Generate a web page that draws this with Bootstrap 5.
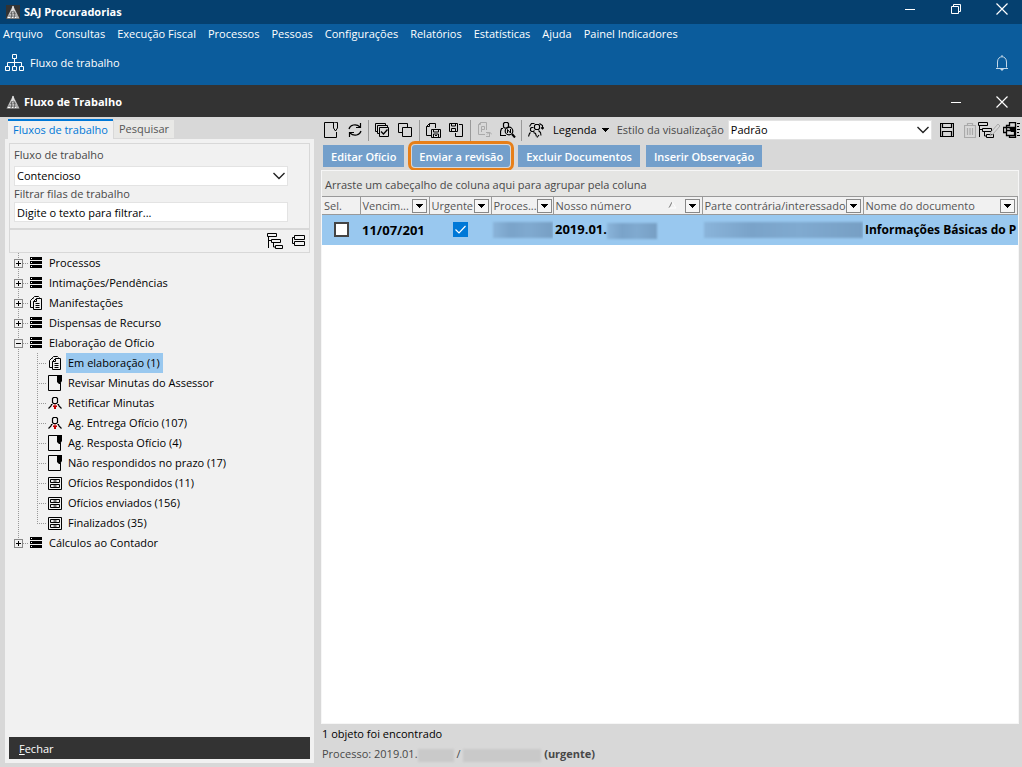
<!DOCTYPE html>
<html lang="pt-BR">
<head>
<meta charset="utf-8">
<meta name="viewport" content="width=device-width, initial-scale=1">
<title>SAJ Procuradorias</title>
<link rel="stylesheet" href="https://cdn.jsdelivr.net/npm/bootstrap@5.3.0/dist/css/bootstrap.min.css">
<style>
  body { font: 11px/16px "Open Sans", "Noto Sans", sans-serif; background: #d8d8d8; color: #000; }
  svg { display: block; flex: none; }
  button, select, input { font: inherit; }

  /* window chrome */
  .app-title { height: 24px; padding-left: 6px; background: #05406f; color: #fff; }
  .app-title .chrome-btn { height: 18px; align-self: flex-start; }
  .app-logo { background: #333; }
  .app-menu { height: 61px; background: #0b5c9c; }
  .app-menu a { color: #fff; text-decoration: none; white-space: nowrap; }
  .menu-row { gap: 12px; padding: 2px 3px 0; }
  .win-title { height: 32px; padding: 2px 0 0 6px; background: #333; color: #fff; }
  .chrome-btn { border: 0; background: none; color: #fff; padding: 0; width: 46px; display: flex; justify-content: center; align-items: center; }
  .chrome-btn:last-child { margin-right: -3px; }

  /* left side */
  .side { width: 309px; margin-left: 5px; }
  .tab-row { padding: 2px 3px 0; gap: 1px; }
  .side-tab { border: 0; height: 18px; padding: 0 5px; background: #e8e8e6; color: #555; line-height: 18px; }
  .side-tab.current { height: 20px; background: #f1f1f1; color: #0078d7; border-top: 2px solid #0078d7; line-height: 16px; }
  .side-body { background: #f1f1f1; padding: 4px; }
  .box { border: 1px solid #d8d8d8; }
  .form-box { padding: 3px 21px 6px 4px; }
  .form-box .drop { margin-top: 3px; }
  .mini-bar { height: 24px; gap: 4px; padding-right: 1px; }
  .box-label { color: #484848; }
  .field { border: 1px solid #e3e3e3; border-radius: 0; background-color: #fff; color: #000; width: 100%; height: 20px; padding: 0 2px; appearance: none; outline: 0; }
  .field::placeholder { color: #000; opacity: 1; }
  .drop { position: relative; }
  .drop svg { position: absolute; right: 3px; top: 6px; pointer-events: none; }
  .close-btn { border: 0; background: #333; color: #fff; height: 22px; padding: 2px 10px 0; text-align: left; }

  /* queue tree */
  .tree, .tree ul { list-style: none; margin: 0; padding: 0; }
  .tree { background: linear-gradient(#999 1px, transparent 1px) 9px 0 / 1px 2px repeat-y; }
  .tree > li:last-child { background: linear-gradient(#f1f1f1, #f1f1f1) 9px 11px / 1px 9px no-repeat; }
  .node { display: flex; align-items: center; height: 20px; }
  .node a { color: #000; text-decoration: none; line-height: 18px; padding: 1px 3px 1px 2px; }
  .node a.picked { background: #99c8ef; }
  .node > svg { margin: 0 5px 0 2px; }
  .toggle { width: 9px; height: 9px; margin-left: 5px; flex: none; padding: 0; border: 1px solid #888; background: #f1f1f1 linear-gradient(#000, #000) center / 5px 1px no-repeat; }
  .toggle.shut { background: linear-gradient(#000, #000) center / 5px 1px no-repeat, linear-gradient(#000, #000) center / 1px 5px no-repeat, #f1f1f1; }
  .dots { width: 5px; height: 1px; background: repeating-linear-gradient(90deg, #999 0 1px, transparent 1px 2px); flex: none; }
  .tree ul { margin-left: 28px; background: linear-gradient(#999 1px, transparent 1px) 0 0 / 1px 2px repeat-y; }
  .tree ul .dots { width: 9px; }
  .tree ul .node > svg { margin: 0 4px 0 2px; }
  .tree ul li:last-child { background: linear-gradient(#f1f1f1, #f1f1f1) 0 11px / 1px 9px no-repeat; }

  /* right side */
  .work { min-width: 0; margin-left: 7px; }
  .tools { height: 26px; padding-left: 1px; }
  .tool-set { gap: 4px; }
  .tool { border: 0; background: none; padding: 0; color: #000; width: 19px; display: flex; justify-content: center; }
  .tool:disabled { color: #aaa; }
  .vbar { width: 1px; height: 21px; background: #999; }
  .legend-btn { border: 0; background: none; padding: 0 8px; gap: 5px; }
  .end-tools { padding: 0 2px 0 6px; }
  .end-tools .tool { width: 17px; }
  .end-tools .save-tool { margin-right: 6px; }
  .end-tools .pen-tool { margin-left: -9px; }
  .actions { padding: 2px 2px 3px; gap: 6px; }
  .act { border: 0; height: 22px; background: #739fcb; color: #fff; font-weight: 600; padding: 1px 8px 0; white-space: nowrap; }
  .act.ring { outline: 3px solid #e77f18; outline-offset: 1px; border-radius: 3px; padding: 1px 7px 0; margin: 0 2px; }
  .sheet { background: #fff; margin-right: 3px; border: 1px solid #f6f6f6; overflow: hidden; }
  .group-bar { height: 25px; background: #e5e5e3; color: #484848; line-height: 27px; padding-left: 3px; }
  .grid { table-layout: fixed; width: 100%; border-collapse: collapse; }
  .grid th { height: 18px; padding: 0 2px 0 2px; border: 1px solid #999; border-left: 0; background: #f1f1f1; color: #555; font-weight: 400; line-height: 16px; white-space: nowrap; }
  .grid td { height: 30px; padding: 0 0 0 2px; background: #99c8ef; font-weight: 700; font-size: 12px; white-space: nowrap; overflow: hidden; }
  .grid td.figure-cell { font-size: 13px; }
  .grid td.tick-cell { padding: 0; }
  .col-sel { width: 38px; }
  .col-due { width: 69px; }
  .col-urg { width: 62px; }
  .col-proc { width: 62px; }
  .col-num { width: 149px; }
  .col-party { width: 161px; }
  .filter { width: 15px; height: 14px; margin-top: 1px; padding: 0; border: 1px solid #888; background: #f6f6f6; display: flex; align-items: center; justify-content: center; flex: none; }
  .tickbox { appearance: none; width: 15px; height: 15px; margin: 0; border: 2px solid #444; background: #fff; display: block; }
  .tickbox:checked { border: 0; background: #0078d7 url("data:image/svg+xml,%3Csvg xmlns='http://www.w3.org/2000/svg' viewBox='0 0 15 15'%3E%3Cpath d='M2.5 7.5 6 11l6.500-7' fill='none' stroke='white' stroke-width='1.200'/%3E%3C/svg%3E"); }
  .masked { display: inline-block; height: 16px; background: linear-gradient(90deg, #8ab4da, #7aa3c9 30%, #80aad0 60%, #779fc4); filter: blur(1px); vertical-align: middle; }
  .masked-grey { display: inline-block; height: 13px; background: #c9c9c9; filter: blur(1px); vertical-align: middle; }
  .mask-num { width: 50px; }
  .mask-a { width: 36px; }
  .mask-b { width: 78px; }
  .foot { height: 43px; padding: 0 1px; line-height: 20px; }
</style>
</head>
<body class="min-vh-100 d-flex flex-column overflow-hidden">

<svg width="0" height="0" class="position-absolute" aria-hidden="true">
  <defs>
    <symbol id="logo" viewBox="0 0 14 14"><path d="M7 .5 13.500 13.500H.5z" fill="#bbb"/><path d="M7 1v4M5.500 5.500h1M8 6h1M6 8h1M4 10h1.500M7 10h2M9.500 11h1.500M2 12.500h2M5 12.500h2M8 12.500h2" stroke="#fff" fill="none"/><path d="M2.500 11h9M4 8.800h6M5 6.800h4M5.500 7v6M8.500 7v6" stroke="#444" stroke-width=".6" fill="none"/></symbol>
    <symbol id="min" viewBox="0 0 10 12"><path d="M0 6h10v1H0z"/></symbol>
    <symbol id="cross" viewBox="0 0 12 12"><path d="M.5.5l11 11M11.500.5l-11 11" fill="none" stroke="currentColor" stroke-width="1.200"/></symbol>
    <symbol id="chev" viewBox="0 0 12 8"><path d="M.5 1 6 6.500 11.500 1" fill="none" stroke="#222" stroke-width="1.400"/></symbol>
    <symbol id="down" viewBox="0 0 7 4"><path d="M0 0h7v1H6v1H5v1H4v1H3V3H2V2H1V1H0z" shape-rendering="crispEdges"/></symbol>
    <symbol id="stack" viewBox="0 0 12 12"><path d="M0 0h12v3H0zM0 4h12v3H0zM0 8h12v3H0z"/><path d="M1 1h1v1H1zM1 5h1v1H1zM1 9h1v1H1z" fill="#fff"/></symbol>
    <symbol id="papers" viewBox="0 0 12 15"><path d="M3.500 5.500v8h8v-11h-5zM6.500 2.500v3h-3M3 11.500H.5v-7l3-3M3.500 2.500v-1l1-1h4l1 1M5.500 7.500h4M5.500 9.500h4M5.500 11.500h4" fill="none" stroke="currentColor"/></symbol>
    <symbol id="note" viewBox="0 0 14 16"><path d="M9 .5H.5v15h12V8" fill="none" stroke="currentColor"/><path d="M9 0h5v6l-2 3h-1L9 7z"/></symbol>
    <symbol id="person" viewBox="0 0 14 13"><path d="M4.500 5.500v-4l1-1h3l1 1v4l-1 1h-3zM4.500 7.500h-1L3 9l-2.500 2.500M9.500 7.500h1L11 9l2.500 2.500" fill="none" stroke="currentColor" stroke-width="1.200"/><path d="M6.500 7h1v1.500H9V10H8v2H6v-2H5V8.500h1.500z" fill="#c00000"/></symbol>
    <symbol id="cabinet" viewBox="0 0 14 13"><path d="M.5.5h13v12H.5zM2.500 2.500h9v3h-9zM2.500 7.500h9v3h-9zM5.500 4h3M5.500 9h3" fill="none" stroke="currentColor"/></symbol>
    <symbol id="hier" viewBox="0 0 17 16"><path d="M.5.500h9v3h-9zM4.500 6.500h9v3h-9zM8.500 12.500h7v3h-7zM1.500 4v11M1.500 7.500h3M6.500 10v4h2" fill="none" stroke="currentColor"/></symbol>
    <symbol id="fold" viewBox="0 0 13 12"><path d="M2.500.5h10v4h-10zM2.500 6.500h10v4h-10zM2 2.500H.5v6H2" fill="none" stroke="currentColor"/></symbol>
    <symbol id="page" viewBox="0 0 15 17"><path d="M9.500.5H.5v15h12V10M9.500 0v6l2 3 2-3V.5z" fill="none" stroke="currentColor"/></symbol>
    <symbol id="cycle" viewBox="0 0 14 14"><path d="M1 6c1-4 7-6 11-2M12.500 0v4.500H8M13 8c-1 4-7 6-11 2M1.500 14V9.500H6" fill="none" stroke="currentColor" stroke-width="1.200"/></symbol>
    <symbol id="copies" viewBox="0 0 15 14"><path d="M4 9.500H.5v-9h9V4M4.500 4.500h9v9h-9z" fill="none" stroke="currentColor"/></symbol>
    <symbol id="copiesok" viewBox="0 0 15 14"><path d="M2 8.500H.5v-8h10V2M4 10.500H2.500v-8h10V4M4.500 4.500h9v9h-9z" fill="none" stroke="currentColor"/><path d="M6 8.500l2.500 2.500 4-4.500" fill="none" stroke="currentColor" stroke-width="1.300"/></symbol>
    <symbol id="pagesave" viewBox="0 0 15 15"><path d="M5 12.500H.5v-9l3-3h6V5M3.500.5v3h-3M5.500 6.500h9v8h-9zM7.500 7v2h5V7M7.500 14v-3h5v3M9 12.500h2" fill="none" stroke="currentColor"/></symbol>
    <symbol id="savepage" viewBox="0 0 15 15"><path d="M.5.5h8v8h-8zM2.500 1v2h4V1M2.500 8V5.500h4V8M10 1.500h3.500v12h-7V10" fill="none" stroke="currentColor"/></symbol>
    <symbol id="pdf" viewBox="0 0 14 16"><path d="M7 12.500H.5V2.500l2-2h6V8M2.500.5v2H.5M3.500 10V4.500h3v3h-3M8 10.500h3.500V15M9 12.500l2.500-2.500 2.500 2.500M8 14.500h3" fill="none" stroke="currentColor"/></symbol>
    <symbol id="search" viewBox="0 0 16 16"><path d="M3.500 5V1.500l1-1h3l1 1V5l-1 1h-3zM3 6.500H1.500l-1 3v4H6" fill="none" stroke="currentColor" stroke-width="1.200"/><circle cx="9" cy="9" r="3.800" fill="none" stroke="currentColor" stroke-width="1.200"/><path d="M12 12l3 3.500" stroke="currentColor" stroke-width="2"/><path d="M7.500 11V7.500l3 3.500V7" fill="none" stroke="currentColor"/></symbol>
    <symbol id="swap" viewBox="0 0 16 15"><path d="M7.500 1.500h3l1 1v3l-1 1h-3l-1-1v-3zM3.500 4.500h2M3.500 4.500l-1 1v2l1 1h2l1-1M.5 13.500l1-3 1-1M5.500 9.500l2 1 1 3M10.500 7.500l2 2 .500 3M1.500 3.500l2-3h3M11.500.5l3 2v3M13 4.500l1.500 1.500L16 4.500M11 12l-2 2.500" fill="none" stroke="currentColor" stroke-width="1.100"/></symbol>
    <symbol id="disk" viewBox="0 0 14 14"><path d="M.5.5h13v13H.5zM2.500 1v3.500h9V1M2.500 13V8.500h9V13" fill="none" stroke="currentColor" stroke-width="1.200"/></symbol>
    <symbol id="bin" viewBox="0 0 12 15"><path d="M0 2.500h12M3.500 2V.5h5V2M.5 3v11.500h11V3M3.500 5v7M6 5v7M8.500 5v7" fill="none" stroke="currentColor" stroke-width="1.200"/></symbol>
    <symbol id="pen" viewBox="0 0 12 14"><path d="M1 13l1-4L9 1l2 2-7 8z" fill="none" stroke="currentColor"/></symbol>
    <symbol id="print" viewBox="0 0 17 16"><path d="M3.500 5.500v-2h3v-3h6v3M3 5.500H.5v5H3M3.500 5.500h8v8h-8zM6.500 14v1.500h6V.5M4 8.500h8" fill="none" stroke="currentColor" stroke-width="1.300"/><path d="M6 5h5v5H8zM14 1h3v1h-3zM14 4h2v1h-2zM14 7h3v1h-3zM14 10h2v1h-2zM14 13h3v1h-3z"/></symbol>
    <symbol id="bell" viewBox="0 0 12 16"><path d="M1.500 12.500V7c0-7 9-7 9 0v5.500M0 13.500h12M6 0v2" fill="none" stroke="#c4d8e8"/><path d="M4 14h4l-2 2z" fill="#c4d8e8"/></symbol>
  </defs>
</svg>

<header>
  <div class="app-title d-flex align-items-center">
    <svg class="app-logo" width="14" height="14"><use href="#logo"/></svg>
    <strong class="ps-1 flex-grow-1">SAJ Procuradorias</strong>
    <button class="chrome-btn" aria-label="Minimizar"><svg width="10" height="12" fill="currentColor"><use href="#min"/></svg></button>
    <button class="chrome-btn" aria-label="Restaurar"><svg width="10" height="12" viewBox="0 0 10 12" fill="none" stroke="#fff"><path d="M.5 3.500h7v7h-7zM2.500 3V1.500h7v7H8"/></svg></button>
    <button class="chrome-btn" aria-label="Fechar aplicativo"><svg width="12" height="12"><use href="#cross"/></svg></button>
  </div>
  <div class="app-menu">
    <nav class="d-flex menu-row">
      <a href="#">Arquivo</a><a href="#">Consultas</a><a href="#">Execução Fiscal</a><a href="#">Processos</a><a href="#">Pessoas</a><a href="#">Configurações</a><a href="#">Relatórios</a><a href="#">Estatísticas</a><a href="#">Ajuda</a><a href="#">Painel Indicadores</a>
    </nav>
    <div class="d-flex align-items-center justify-content-between pt-2 mt-1 text-white">
      <a href="#" class="d-flex align-items-center"><svg class="mx-1" width="22" height="18" viewBox="0 0 22 18" fill="none" stroke="#fff"><path d="M8.500.5h4v4h-4zM1.500 12.500h4v4h-4zM8.500 12.500h4v4h-4zM15.500 12.500h4v4h-4zM10.500 5v7M3.500 12V8.500h14V12"/></svg>Fluxo de trabalho</a>
      <button class="chrome-btn" aria-label="Avisos"><svg width="12" height="16"><use href="#bell"/></svg></button>
    </div>
  </div>
  <div class="win-title d-flex align-items-center">
    <svg width="14" height="14"><use href="#logo"/></svg>
    <strong class="ps-1 flex-grow-1">Fluxo de Trabalho</strong>
    <button class="chrome-btn" aria-label="Minimizar janela"><svg width="10" height="12" fill="currentColor"><use href="#min"/></svg></button>
    <button class="chrome-btn" aria-label="Fechar janela"><svg width="12" height="12"><use href="#cross"/></svg></button>
  </div>
</header>

<main class="d-flex flex-grow-1">
  <aside class="side d-flex flex-column flex-shrink-0 mb-1">
    <div class="tab-row d-flex align-items-center">
      <button class="side-tab current">Fluxos de trabalho</button><button class="side-tab">Pesquisar</button>
    </div>
    <div class="side-body d-flex flex-column flex-grow-1">
      <div class="box form-box">
        <label class="box-label d-block" for="flow">Fluxo de trabalho</label>
        <div class="drop"><select id="flow" class="field"><option>Contencioso</option></select><svg width="12" height="8"><use href="#chev"/></svg></div>
        <label class="box-label d-block" for="queue">Filtrar filas de trabalho</label>
        <input id="queue" class="field" type="text" placeholder="Digite o texto para filtrar...">
      </div>
      <div class="box mini-bar d-flex justify-content-end align-items-center">
        <button class="tool" aria-label="Expandir"><svg width="17" height="16"><use href="#hier"/></svg></button>
        <button class="tool" aria-label="Recolher"><svg width="13" height="12"><use href="#fold"/></svg></button>
      </div>
      <ul class="tree">
        <li class="node"><button class="toggle shut" aria-label="Abrir Processos"></button><i class="dots"></i><svg width="12" height="12"><use href="#stack"/></svg><a href="#">Processos</a></li>
        <li class="node"><button class="toggle shut" aria-label="Abrir Intimações"></button><i class="dots"></i><svg width="12" height="12"><use href="#stack"/></svg><a href="#">Intimações/Pendências</a></li>
        <li class="node"><button class="toggle shut" aria-label="Abrir Manifestações"></button><i class="dots"></i><svg width="12" height="15"><use href="#papers"/></svg><a href="#">Manifestações</a></li>
        <li class="node"><button class="toggle shut" aria-label="Abrir Dispensas"></button><i class="dots"></i><svg width="12" height="12"><use href="#stack"/></svg><a href="#">Dispensas de Recurso</a></li>
        <li><div class="node"><button class="toggle" aria-label="Fechar Elaboração"></button><i class="dots"></i><svg width="12" height="12"><use href="#stack"/></svg><a href="#">Elaboração de Ofício</a></div>
          <ul>
            <li class="node"><i class="dots"></i><svg width="14" height="15"><use href="#papers"/></svg><a class="picked" href="#">Em elaboração (1)</a></li>
            <li class="node"><i class="dots"></i><svg width="14" height="16"><use href="#note"/></svg><a href="#">Revisar Minutas do Assessor</a></li>
            <li class="node"><i class="dots"></i><svg width="14" height="13"><use href="#person"/></svg><a href="#">Retificar Minutas</a></li>
            <li class="node"><i class="dots"></i><svg width="14" height="13"><use href="#person"/></svg><a href="#">Ag. Entrega Ofício (107)</a></li>
            <li class="node"><i class="dots"></i><svg width="14" height="16"><use href="#note"/></svg><a href="#">Ag. Resposta Ofício (4)</a></li>
            <li class="node"><i class="dots"></i><svg width="14" height="16"><use href="#note"/></svg><a href="#">Não respondidos no prazo (17)</a></li>
            <li class="node"><i class="dots"></i><svg width="14" height="13"><use href="#cabinet"/></svg><a href="#">Ofícios Respondidos (11)</a></li>
            <li class="node"><i class="dots"></i><svg width="14" height="13"><use href="#cabinet"/></svg><a href="#">Ofícios enviados (156)</a></li>
            <li class="node"><i class="dots"></i><svg width="14" height="13"><use href="#cabinet"/></svg><a href="#">Finalizados (35)</a></li>
          </ul>
        </li>
        <li class="node"><button class="toggle shut" aria-label="Abrir Cálculos"></button><i class="dots"></i><svg width="12" height="12"><use href="#stack"/></svg><a href="#">Cálculos ao Contador</a></li>
      </ul>
      <button class="close-btn mt-auto"><u>F</u>echar</button>
    </div>
  </aside>

  <section class="work flex-grow-1 d-flex flex-column">
    <div class="tools d-flex align-items-center">
      <div class="d-flex align-items-center tool-set">
        <button class="tool" aria-label="Novo"><svg width="15" height="17"><use href="#page"/></svg></button>
        <button class="tool" aria-label="Atualizar"><svg width="14" height="14"><use href="#cycle"/></svg></button>
        <span class="vbar"></span>
        <button class="tool" aria-label="Marcar todos"><svg width="15" height="14"><use href="#copiesok"/></svg></button>
        <button class="tool" aria-label="Desmarcar todos"><svg width="15" height="14"><use href="#copies"/></svg></button>
        <span class="vbar"></span>
        <button class="tool" aria-label="Salvar modelo"><svg width="15" height="15"><use href="#pagesave"/></svg></button>
        <button class="tool" aria-label="Carregar modelo"><svg width="15" height="15"><use href="#savepage"/></svg></button>
        <span class="vbar"></span>
        <button class="tool" disabled aria-label="Exportar"><svg width="14" height="16"><use href="#pdf"/></svg></button>
        <button class="tool" aria-label="Consultar"><svg width="16" height="16"><use href="#search"/></svg></button>
        <span class="vbar"></span>
        <button class="tool" aria-label="Transferir"><svg width="16" height="15"><use href="#swap"/></svg></button>
      </div>
      <button class="legend-btn d-flex align-items-center">Legenda <svg width="7" height="4"><use href="#down"/></svg></button>
      <label for="viewstyle" class="box-label text-nowrap">Estilo da visualização</label>
      <div class="drop flex-grow-1 ms-1"><select id="viewstyle" class="field"><option>Padrão</option></select><svg width="12" height="8"><use href="#chev"/></svg></div>
      <div class="d-flex align-items-center end-tools">
        <button class="tool save-tool" aria-label="Salvar estilo"><svg width="14" height="14"><use href="#disk"/></svg></button>
        <button class="tool" disabled aria-label="Excluir estilo"><svg width="12" height="15"><use href="#bin"/></svg></button>
        <button class="tool" aria-label="Agrupar"><svg width="17" height="16"><use href="#hier"/></svg></button>
        <button class="tool pen-tool" disabled aria-label="Editar estilo"><svg width="12" height="14"><use href="#pen"/></svg></button>
        <button class="tool" aria-label="Imprimir"><svg width="17" height="16"><use href="#print"/></svg></button>
      </div>
    </div>
    <div class="d-flex actions">
      <button class="act">Editar Ofício</button><button class="act ring">Enviar a revisão</button><button class="act">Excluir Documentos</button><button class="act">Inserir Observação</button>
    </div>
    <div class="sheet flex-grow-1">
      <div class="group-bar">Arraste um cabeçalho de coluna aqui para agrupar pela coluna</div>
      <table class="grid">
        <colgroup><col class="col-sel"><col class="col-due"><col class="col-urg"><col class="col-proc"><col class="col-num"><col class="col-party"><col></colgroup>
        <thead><tr>
          <th>Sel.</th>
          <th><div class="d-flex"><span class="me-auto">Vencim...</span><button class="filter" aria-label="Filtrar vencimento"><svg width="7" height="4"><use href="#down"/></svg></button></div></th>
          <th><div class="d-flex"><span class="me-auto">Urgente</span><button class="filter" aria-label="Filtrar urgente"><svg width="7" height="4"><use href="#down"/></svg></button></div></th>
          <th><div class="d-flex"><span class="me-auto">Proces...</span><button class="filter" aria-label="Filtrar processo"><svg width="7" height="4"><use href="#down"/></svg></button></div></th>
          <th><div class="d-flex"><span class="me-auto">Nosso número</span><svg class="me-2" width="9" height="14" viewBox="0 0 9 14" fill="none"><path d="M1 10 4 4" stroke="#777"/><path d="M4 4l4 6H1" stroke="#fff"/></svg><button class="filter" aria-label="Filtrar número"><svg width="7" height="4"><use href="#down"/></svg></button></div></th>
          <th><div class="d-flex"><span class="me-auto">Parte contrária/interessado</span><button class="filter" aria-label="Filtrar parte"><svg width="7" height="4"><use href="#down"/></svg></button></div></th>
          <th><div class="d-flex"><span class="me-auto">Nome do documento</span><button class="filter" aria-label="Filtrar documento"><svg width="7" height="4"><use href="#down"/></svg></button></div></th>
        </tr></thead>
        <tbody><tr>
          <td class="tick-cell"><input type="checkbox" class="tickbox mx-auto" aria-label="Selecionar"></td>
          <td class="figure-cell">11/07/201</td>
          <td class="tick-cell"><input type="checkbox" class="tickbox mx-auto" checked aria-label="Urgente"></td>
          <td><span class="masked w-100"></span></td>
          <td class="figure-cell">2019.01.<span class="masked mask-num"></span></td>
          <td><span class="masked w-100"></span></td>
          <td>Informações Básicas do P</td>
        </tr></tbody>
      </table>
    </div>
    <footer class="foot">
      <div>1 objeto foi encontrado</div>
      <div class="box-label">Processo: 2019.01.<span class="masked-grey mask-a"></span> / <span class="masked-grey mask-b"></span> <strong>(urgente)</strong></div>
    </footer>
  </section>
</main>
<script src="https://cdn.jsdelivr.net/npm/bootstrap@5.3.0/dist/js/bootstrap.bundle.min.js"></script>
</body>
</html>
